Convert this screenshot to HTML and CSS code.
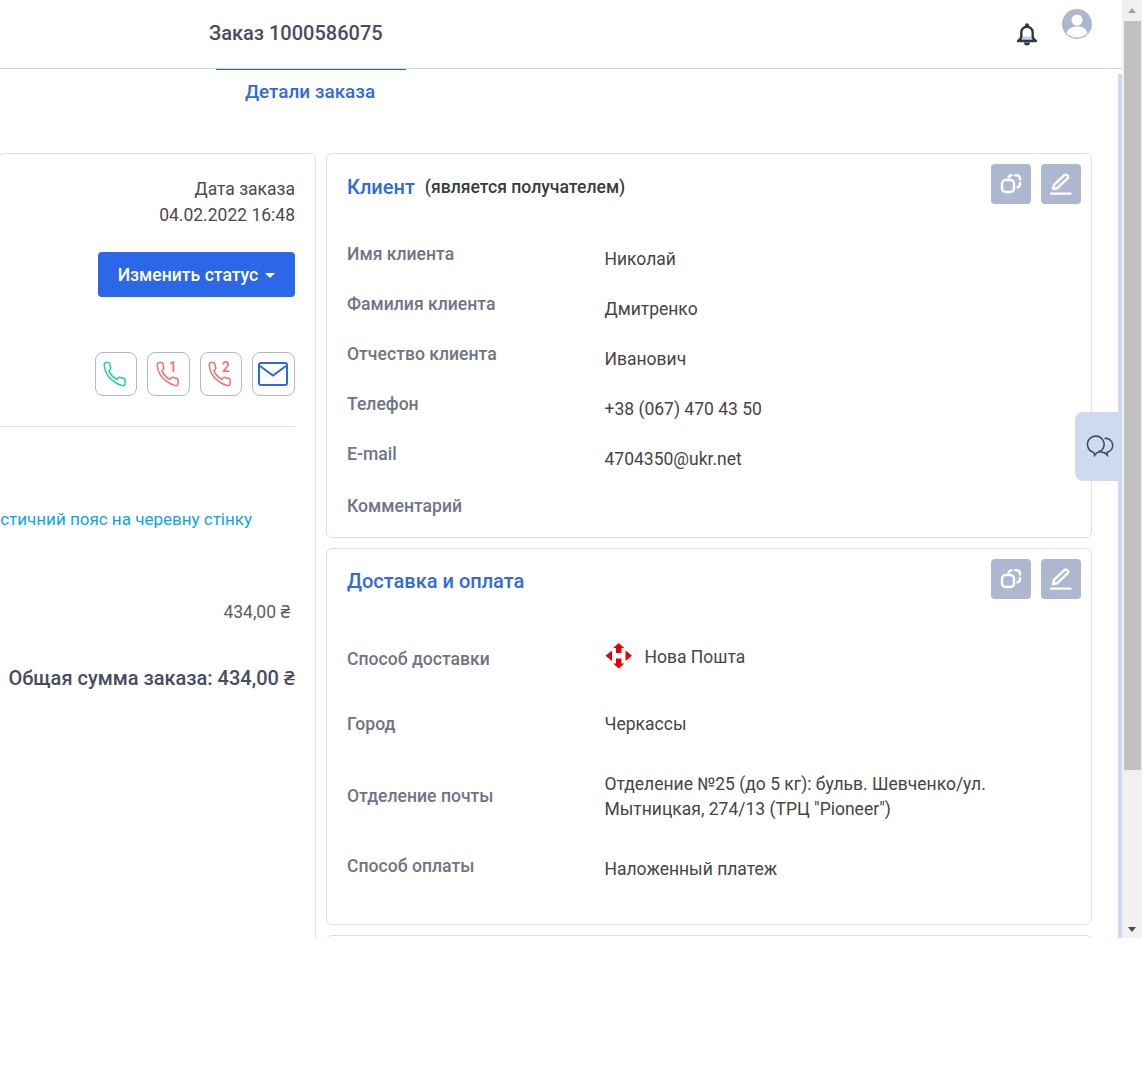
FILE: index.html
```html
<!DOCTYPE html>
<html lang="ru">
<head>
    <meta charset="UTF-8">
    <meta name="viewport" content="width=device-width, initial-scale=1.0">
    <title>Заказ 1000586075</title>
    <link rel="stylesheet" href="styles.css">
</head>
<body>

    <div class="window">
        <div class="app">
            <!-- Header -->
            <header class="topbar">
                <div class="order-title">Заказ 1000586075</div>
                <div class="topbar-icons">
                    <svg class="bell" width="22" height="24" viewBox="0 0 22 24">
                        <rect x="5.500" y="13.500" width="11" height="3.500" fill="#c3d0ec"/>
                        <path d="M2 18c2.200-1 3.300-2.700 3.300-5V9.500a5.700 5.700 0 0 1 11.400 0V13c0 2.300 1.100 4 3.300 5z" fill="none" stroke="#33373f" stroke-width="2.400" stroke-linejoin="round"/>
                        <circle cx="11" cy="2.300" r="2" fill="#33373f"/>
                        <path d="M8 19.500h6a3 3 0 0 1-6 0z" fill="#33373f"/>
                    </svg>
                    <svg class="avatar" width="30" height="30" viewBox="0 0 30 30">
                        <circle cx="15" cy="15" r="15" fill="#aeb7d0"/>
                        <circle cx="15" cy="11" r="5.500" fill="#fff"/>
                        <path d="M4.500 24c1.500-4.500 5.500-6.500 10.500-6.500S24 19.500 25.500 24a14.500 14.500 0 0 1-21 0z" fill="#fff"/>
                    </svg>
                </div>
            </header>

            <div class="workspace">
                <div class="content">
                    <!-- Tabs -->
                    <nav class="tabs">
                        <div class="tab active">Детали заказа</div>
                    </nav>

                    <div class="columns">
                        <!-- Left order card -->
                        <section class="card order-card">
                            <div class="order-date">
                                <div>Дата заказа</div>
                                <div>04.02.2022 16:48</div>
                            </div>
                            <button class="status-btn">Изменить статус<span class="caret"></span></button>
                            <div class="contact-row">
                                <div class="contact-btn">
                                    <svg class="phone-green" width="28" height="28" viewBox="0 0 28 28">
                                        <path transform="translate(0 1.500) scale(1.050)" d="M22 20.500v.5a2 2 0 0 1-2.180 2 19.790 19.790 0 0 1-8.630-4.070 19.500 19.500 0 0 1-6-6 19.790 19.790 0 0 1-3.070-9.670A2 2 0 0 1 4.110 1h1.500a2 2 0 0 1 2 1.720 12.840 12.840 0 0 0 .7 2.810 2 2 0 0 1-.45 2.110L6.590 8.910a16 16 0 0 0 7.500 8l1.270-1.270a2 2 0 0 1 2.110-.45 12.840 12.840 0 0 0 2.810.7A2 2 0 0 1 22 18z"/>
                                    </svg>
                                </div>
                                <div class="contact-btn wide">
                                    <svg class="phone-red" width="28" height="28" viewBox="0 0 28 28">
                                        <path transform="translate(0 1.500) scale(1.050)" d="M22 20.500v.5a2 2 0 0 1-2.180 2 19.790 19.790 0 0 1-8.630-4.070 19.500 19.500 0 0 1-6-6 19.790 19.790 0 0 1-3.070-9.670A2 2 0 0 1 4.110 1h1.500a2 2 0 0 1 2 1.720 12.840 12.840 0 0 0 .7 2.810 2 2 0 0 1-.45 2.110L6.590 8.910a16 16 0 0 0 7.500 8l1.270-1.270a2 2 0 0 1 2.110-.45 12.840 12.840 0 0 0 2.810.7A2 2 0 0 1 22 18z"/>
                                        <text x="14" y="12">1</text>
                                    </svg>
                                </div>
                                <div class="contact-btn">
                                    <svg class="phone-red" width="28" height="28" viewBox="0 0 28 28">
                                        <path transform="translate(0 1.500) scale(1.050)" d="M22 20.500v.5a2 2 0 0 1-2.180 2 19.790 19.790 0 0 1-8.630-4.070 19.500 19.500 0 0 1-6-6 19.790 19.790 0 0 1-3.070-9.670A2 2 0 0 1 4.110 1h1.500a2 2 0 0 1 2 1.720 12.840 12.840 0 0 0 .7 2.810 2 2 0 0 1-.45 2.110L6.590 8.910a16 16 0 0 0 7.500 8l1.270-1.270a2 2 0 0 1 2.110-.45 12.840 12.840 0 0 0 2.810.7A2 2 0 0 1 22 18z"/>
                                        <text x="15" y="12">2</text>
                                    </svg>
                                </div>
                                <div class="contact-btn wide">
                                    <svg class="mail" width="30" height="24" viewBox="0 0 30 24">
                                        <rect x="1" y="1" width="28" height="22" rx="2" fill="none" stroke="#2b67e6" stroke-width="2"/>
                                        <path d="M2 4L15 13.500 28 4" fill="none" stroke="#2b67e6" stroke-width="2"/>
                                    </svg>
                                </div>
                            </div>
                            <div class="divider"></div>
                            <div class="product-name">Еластичний пояс на черевну стінку</div>
                            <div class="price-row"><span class="price-mark">1</span><span class="price">434,00 ₴</span></div>
                            <div class="order-total">Общая сумма заказа: 434,00 ₴</div>
                        </section>

                        <div class="details">
                            <!-- Client -->
                            <section class="card info-card client-card">
                                <div class="card-head">
                                    <h2 class="card-title">Клиент</h2>
                                    <span class="card-note">(является получателем)</span>
                                    <div class="card-actions">
                                        <div class="action-btn">
                                            <svg width="22" height="22" viewBox="0 0 22 22"><use href="#copy-icon"/></svg>
                                        </div>
                                        <div class="action-btn">
                                            <svg width="22" height="22" viewBox="0 0 22 22"><use href="#pen-icon"/></svg>
                                        </div>
                                    </div>
                                </div>
                                <div class="info-row"><div class="info-label">Имя клиента</div><div class="info-value">Николай</div></div>
                                <div class="info-row"><div class="info-label">Фамилия клиента</div><div class="info-value">Дмитренко</div></div>
                                <div class="info-row"><div class="info-label">Отчество клиента</div><div class="info-value">Иванович</div></div>
                                <div class="info-row"><div class="info-label">Телефон</div><div class="info-value">+38 (067) 470 43 50</div></div>
                                <div class="info-row"><div class="info-label">E-mail</div><div class="info-value">4704350@ukr.net</div></div>
                                <div class="info-row"><div class="info-label">Комментарий</div><div class="info-value"></div></div>
                            </section>

                            <!-- Delivery -->
                            <section class="card info-card delivery-card">
                                <div class="card-head short">
                                    <h2 class="card-title big">Доставка и оплата</h2>
                                    <div class="card-actions">
                                        <div class="action-btn">
                                            <svg width="22" height="22" viewBox="0 0 22 22"><use href="#copy-icon"/></svg>
                                        </div>
                                        <div class="action-btn">
                                            <svg width="22" height="22" viewBox="0 0 22 22"><use href="#pen-icon"/></svg>
                                        </div>
                                    </div>
                                </div>
                                <div class="delivery-row method">
                                    <div class="info-label">Способ доставки</div>
                                    <div class="info-value carrier">
                                        <svg width="28" height="28" viewBox="0 1 28 28">
                                            <path d="M13.700 1l5.500 5h-2.800v5h-5.400V6H8.200zM13.700 26.500l5.500-5h-2.800v-5h-5.400v5H8.200zM.5 13.700L7 8.500v10.500zM27 13.700L20.500 8.500v10.500z" fill="#e60000"/>
                                        </svg>
                                        <span>Нова Пошта</span>
                                    </div>
                                </div>
                                <div class="delivery-row city">
                                    <div class="info-label">Город</div>
                                    <div class="info-value">Черкассы</div>
                                </div>
                                <div class="delivery-row branch">
                                    <div class="info-label">Отделение почты</div>
                                    <div class="info-value">Отделение №25 (до 5 кг): бульв. Шевченко/ул. Мытницкая, 274/13 (ТРЦ "Pioneer")</div>
                                </div>
                                <div class="delivery-row payment">
                                    <div class="info-label">Способ оплаты</div>
                                    <div class="info-value">Наложенный платеж</div>
                                </div>
                            </section>

                            <section class="card info-card more-card"></section>
                        </div>
                    </div>
                </div>
                <div class="inner-scroll"></div>

                <!-- Chat tab -->
                <div class="chat-tab">
                    <svg width="30" height="24" viewBox="0 0 30 24" fill="none" stroke="#474d60" stroke-width="1.600">
                        <path d="M9 18.500a8.300 8.300 0 1 1 3 .1"/>
                        <path d="M9 18.500l.5 3 2.500-2.900"/>
                        <path d="M19.500 4.500a7 7 0 0 1 2.500 13.800l.4 3-3-2.700a9 9 0 0 1-5.500-1.700"/>
                    </svg>
                </div>
            </div>
        </div>

        <!-- Window scrollbar -->
        <div class="scrollbar">
            <div class="arrow-up"></div>
            <div class="thumb"></div>
            <div class="arrow-down"></div>
        </div>
    </div>

    <svg class="icon-defs" width="0" height="0">
        <defs>
            <g id="copy-icon" fill="none" stroke="#fff" stroke-width="2.400" stroke-linecap="round">
                <rect x="2" y="7" width="12" height="12" rx="3.500"/>
                <path d="M8.500 4.500C9 3 10 2.300 11.500 2.200M15 2.200h1.500c2 0 3.500 1.500 3.500 3.500v.8M20 10v1c0 1.500-1 3-2.500 3.300"/>
            </g>
            <g id="pen-icon" fill="none" stroke="#fff" stroke-linecap="round" stroke-linejoin="round">
                <path d="M3 16l1-4.200L14.300 2.200a2 2 0 0 1 2.900 0l.3.300a2 2 0 0 1 0 2.900L7.300 15.200z" stroke-width="2.400"/>
                <path d="M1 20.700h19.500" stroke-width="2.200"/>
            </g>
        </defs>
    </svg>

</body>
</html>
```

FILE: styles.css
```css
body {
    margin: 0;
    background: #fff;
    font-family: Roboto, "Noto Sans", sans-serif;
    font-size: 17.5px;
    color: #4a4a4f;
    overflow: hidden;
}

.window {
    display: flex;
    height: 938px;
    overflow: hidden;
}

.app {
    width: 1122px;
    display: flex;
    flex-direction: column;
}

/* Header */
.topbar {
    height: 68px;
    flex: none;
    display: flex;
    justify-content: space-between;
    border-bottom: 1px solid #cfdaec;
}

.order-title {
    margin: 21px 0 0 209px;
    font-size: 20px;
    line-height: 24px;
    font-weight: 500;
    color: #474d60;
}

.topbar-icons {
    display: flex;
    align-items: flex-start;
    gap: 24px;
    padding: 9px 30px 0 0;
}

.bell {
    margin-top: 14px;
}

.workspace {
    position: relative;
    flex: 1;
    display: flex;
    min-height: 0;
}

.content {
    width: 1118px;
    flex: none;
}

.inner-scroll {
    width: 4px;
    margin-top: 5px;
    background: #d0daee;
}

/* Tabs */
.tabs {
    height: 84px;
    padding-left: 216px;
}

.tab {
    box-sizing: border-box;
    width: 190px;
    height: 45px;
    padding-right: 2px;
    line-height: 44px;
    text-align: center;
    font-size: 18.9px;
    font-weight: 500;
    color: #2f6ae0;
}

.tab.active {
    border-top: 1px solid #3461c1;
}

.columns {
    display: flex;
    gap: 10px;
}

.card {
    box-sizing: border-box;
    background: #fff;
    border: 1px solid #dedfe3;
    border-radius: 6px;
}

/* Left order card */
.order-card {
    width: 318px;
    height: 800px;
    margin-left: -2px;
    padding: 22px 20px 0 0;
    text-align: right;
    display: flex;
    flex-direction: column;
    align-items: flex-end;
    overflow: hidden;
}

.order-date {
    line-height: 26px;
}

.status-btn {
    width: 197px;
    height: 45px;
    margin-top: 24px;
    border: none;
    border-radius: 4px;
    background: #2b67e6;
    color: #fff;
    font-family: inherit;
    font-size: 17.6px;
    font-weight: 500;
}

.caret {
    display: inline-block;
    margin-left: 7px;
    vertical-align: 3px;
    border-top: 5px solid #fff;
    border-left: 5px solid transparent;
    border-right: 5px solid transparent;
}

.contact-row {
    display: flex;
    gap: 10px;
    margin-top: 55px;
}

.contact-btn {
    box-sizing: border-box;
    width: 42px;
    height: 44px;
    display: flex;
    justify-content: center;
    align-items: center;
    border: 1px solid #b0b8d0;
    border-radius: 8px;
}

.contact-btn.wide {
    width: 43px;
}

.mail {
    margin-left: -1px;
}

.phone-green path {
    fill: none;
    stroke: #1fcf9e;
    stroke-width: 1.400;
}

.phone-red path {
    fill: none;
    stroke: #f56e6e;
    stroke-width: 1.400;
}

.phone-red text {
    font-family: Roboto, sans-serif;
    font-size: 14px;
    font-weight: 500;
    fill: #f56e6e;
}

.divider {
    width: 100%;
    flex: none;
    height: 1px;
    margin-top: 30px;
    background: #e0e0e3;
}

.product-name {
    margin-top: 82px;
    margin-right: 43px;
    font-size: 17px;
    line-height: 20px;
    white-space: nowrap;
    color: #0ba4ee;
}

.price-row {
    width: 100%;
    display: flex;
    justify-content: space-between;
    margin-top: 73px;
    line-height: 20px;
}

.price-mark {
    margin-left: -7px;
    color: #0ba4ee;
}

.price {
    margin-right: 5px;
    color: #5a5d6b;
}

.order-total {
    margin-top: 44px;
    font-size: 20px;
    line-height: 24px;
    font-weight: 500;
    color: #474d60;
    white-space: nowrap;
}

/* Right cards */
.details {
    width: 766px;
    display: flex;
    flex-direction: column;
    gap: 10px;
}

.info-card {
    flex: none;
    padding: 0 10px 0 20px;
}

.client-card {
    height: 385px;
}

.delivery-card {
    height: 377px;
}

.more-card {
    height: 200px;
}

.card-head {
    height: 90px;
    display: flex;
    align-items: flex-start;
}

.card-head.short {
    height: 80px;
}

.card-title {
    margin: 21px 0 0;
    font-size: 20px;
    line-height: 24px;
    font-weight: 500;
    color: #2f6ae0;
}

.card-title.big {
    margin-top: 20px;
}

.card-note {
    margin: 23px 0 0 10px;
    font-size: 17.6px;
    line-height: 20px;
    font-weight: 500;
    color: #3b3b40;
}

.card-actions {
    margin-left: auto;
    display: flex;
    gap: 10px;
    padding-top: 10px;
}

.action-btn {
    width: 40px;
    height: 40px;
    display: flex;
    justify-content: center;
    align-items: center;
    background: #aeb7d0;
    border-radius: 4px;
}

.info-row {
    display: grid;
    grid-template-columns: 257.500px 1fr;
    height: 50px;
}

.info-label {
    font-size: 17.6px;
    font-weight: 500;
    color: #707484;
    line-height: 20px;
}

.info-value {
    margin-top: 3px;
    line-height: 25px;
    color: #4a4345;
}

.info-row:last-child .info-label {
    margin-top: 2px;
}

.delivery-row {
    display: grid;
    grid-template-columns: 257.500px 1fr;
    align-items: center;
}

.delivery-row .info-value {
    margin-top: 0;
    padding-right: 60px;
}

.delivery-row.method {
    height: 60px;
}

.delivery-row .carrier {
    display: flex;
    align-items: center;
    gap: 12px;
    margin-bottom: 4px;
}

.delivery-row.city {
    height: 70px;
}

.delivery-row.branch {
    height: 75px;
}

.delivery-row.branch .info-label {
    margin-bottom: 2px;
}

.delivery-row.payment {
    height: 63px;
}

.delivery-row.payment .info-value {
    padding-top: 8px;
}

/* Chat tab */
.chat-tab {
    position: absolute;
    top: 343px;
    right: 4px;
    width: 43px;
    height: 69px;
    display: flex;
    justify-content: center;
    align-items: center;
    background: #d0daee;
    border-radius: 8px 0 0 8px;
}

.chat-tab svg {
    margin: -2px 0 0 6px;
}

/* Window scrollbar */
.scrollbar {
    width: 20px;
    flex: none;
    position: relative;
    background: #f1f1f1;
}

.thumb {
    position: absolute;
    top: 21px;
    left: 2px;
    width: 17px;
    height: 749px;
    background: #c1c1c1;
}

.arrow-up {
    position: absolute;
    top: 8px;
    left: 6px;
    border-bottom: 5px solid #a3a3a3;
    border-left: 4px solid transparent;
    border-right: 4px solid transparent;
}

.arrow-down {
    position: absolute;
    bottom: 6px;
    left: 6px;
    border-top: 5px solid #505050;
    border-left: 4px solid transparent;
    border-right: 4px solid transparent;
}

.icon-defs {
    position: absolute;
}
```
